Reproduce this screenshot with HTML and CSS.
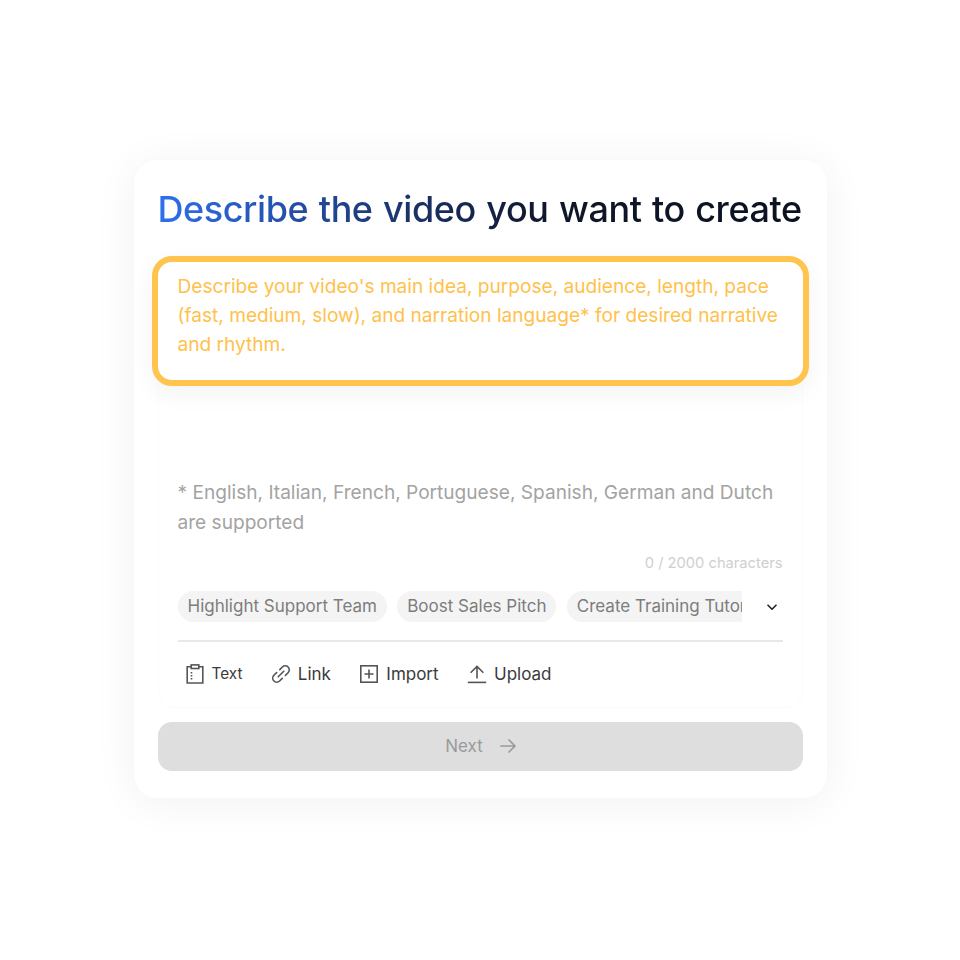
FILE: index.html
```html
<!DOCTYPE html>
<html lang="en">
<head>
    <meta charset="UTF-8">
    <meta name="viewport" content="width=device-width, initial-scale=1.0">
    <title>Describe your video</title>
    <link rel="stylesheet" href="styles.css">
</head>
<body>
    <div class="card">
        <h1 class="title">Describe the video you want to create</h1>

        <div class="panel">
            <div class="prompt-box">
                Describe your video's main idea, purpose, audience, length, pace (fast, medium, slow), and narration language* for desired narrative and rhythm.
            </div>

            <p class="languages">* English, Italian, French, Portuguese, Spanish, German and Dutch are supported</p>
            <div class="counter">0 / 2000 characters</div>

            <div class="chips-row">
                <div class="chips">
                    <span class="chip">Highlight Support Team</span>
                    <span class="chip">Boost Sales Pitch</span>
                    <span class="chip chip-last">Create Training Tutorial</span>
                </div>
                <svg class="chevron" width="12" height="12" viewBox="0 0 12 12" fill="none" stroke="#222" stroke-width="1.6" stroke-linecap="round" stroke-linejoin="round">
                    <path d="M2 4.2 6 8.2 10 4.2"/>
                </svg>
            </div>

            <div class="tabs">
                <div class="tab tab-text">
                    <svg width="20" height="20" viewBox="0 0 20 20" fill="none" stroke="#555" stroke-width="1.6">
                        <path d="M6.5 2.8H2.2V19H17.8V2.8H13.5"/>
                        <rect x="6.2" y="0.9" width="7.6" height="3.6"/>
                        <path d="M6.5 8V9.4M6.5 11V12.4M6.5 14V15.4"/>
                    </svg>
                    <span>Text</span>
                </div>
                <div class="tab">
                    <svg width="20" height="20" viewBox="0 0 20 20" fill="none" stroke="#555" stroke-width="1.6" stroke-linecap="round">
                        <path d="M8.8 5.6 11.4 3a4 4 0 0 1 5.7 5.7l-2.7 2.7"/>
                        <path d="M11.2 14.4 8.6 17A4 4 0 0 1 2.9 11.3l2.7-2.7"/>
                        <path d="M7.2 12.8 12.8 7.2"/>
                    </svg>
                    <span>Link</span>
                </div>
                <div class="tab">
                    <svg width="20" height="20" viewBox="0 0 20 20" fill="none" stroke="#555" stroke-width="1.6">
                        <rect x="1.8" y="1.8" width="16.4" height="16.4"/>
                        <path d="M10 5.5v9M5.5 10h9"/>
                    </svg>
                    <span>Import</span>
                </div>
                <div class="tab">
                    <svg width="20" height="20" viewBox="0 0 20 20" fill="none" stroke="#555" stroke-width="1.6">
                        <path d="M10 14.5V2.6M3.6 8.8 10 2.4l6.4 6.4"/>
                        <path d="M0.8 18.4h18.4"/>
                    </svg>
                    <span>Upload</span>
                </div>
            </div>
        </div>

        <button class="next-btn" type="button">
            Next
            <svg width="20" height="20" viewBox="0 0 20 20" fill="none" stroke="#9a9a9a" stroke-width="1.7" stroke-linecap="round" stroke-linejoin="round">
                <path d="M3 10h14M11 4l6 6-6 6"/>
            </svg>
        </button>
    </div>
</body>
</html>
```

FILE: styles.css
```css
* {
    margin: 0;
    padding: 0;
    box-sizing: border-box;
    font-family: Inter, "Liberation Sans", sans-serif;
}

body {
    display: flex;
    justify-content: center;
    align-items: flex-start;
    min-height: 100vh;
    padding-top: 160px;
    background-color: #fff;
}

.card {
    width: 693px;
    height: 638px;
    padding: 24px;
    border-radius: 24px;
    background-color: #fff;
    box-shadow: 0 4px 44px rgba(0, 0, 0, 0.06);
}

.title {
    font-size: 36px;
    line-height: 50px;
    font-weight: 500;
    letter-spacing: -0.42px;
    word-spacing: 1.3px;
    white-space: nowrap;
    background: linear-gradient(90deg, #2f6fed 0%, #1a3166 40%, #0f172a 60%, #0b1220 100%);
    -webkit-background-clip: text;
    background-clip: text;
    color: transparent;
}

.panel {
    margin-top: 22px;
    height: 452px;
    padding: 0 19px;
    border: 1px solid #fbfbfb;
    border-top: none;
    border-radius: 16px;
}

.prompt-box {
    margin: 0 -26px;
    height: 130px;
    padding: 10px 20px;
    border: 6px solid #ffc44d;
    border-radius: 20px;
    background-color: #fff;
    box-shadow: 0 8px 24px rgba(0, 0, 0, 0.05);
    font-size: 19.1px;
    line-height: 29px;
    color: #ffc14a;
}

.languages {
    margin-top: 91px;
    font-size: 19.1px;
    line-height: 30px;
    color: #a3a3a3;
}

.counter {
    margin-top: 16px;
    font-size: 14.7px;
    line-height: 20px;
    text-align: right;
    color: #cfcfcf;
}

.chips-row {
    display: flex;
    align-items: center;
    justify-content: space-between;
    margin-top: 18px;
    padding-bottom: 18px;
    border-bottom: 2px solid #e8e8e8;
}

.chips {
    display: flex;
    gap: 10.3px;
    width: 564px;
    overflow: hidden;
}

.chip {
    flex-shrink: 0;
    height: 31px;
    padding: 0 10px;
    border-radius: 16px;
    background-color: #f4f4f4;
    font-size: 17px;
    line-height: 30px;
    color: #7d7d7d;
}

.chip-last {
    border-radius: 16px 0 0 16px;
}

.chevron {
    margin-right: 5px;
}

.tabs {
    display: flex;
    align-items: center;
    gap: 28.4px;
    padding: 20px 7px 0;
}

.tab {
    display: flex;
    align-items: center;
    gap: 7px;
    font-size: 17px;
    line-height: 24px;
    color: #3a3a3a;
}

.tab-text span {
    font-size: 15.3px;
}

.next-btn {
    display: flex;
    align-items: center;
    justify-content: center;
    gap: 15px;
    width: 100%;
    height: 49px;
    margin-top: 14px;
    padding: 0 0 2px 3px;
    border: none;
    border-radius: 14px;
    background-color: #dedede;
    font-size: 17px;
    color: #9a9a9a;
}
```
